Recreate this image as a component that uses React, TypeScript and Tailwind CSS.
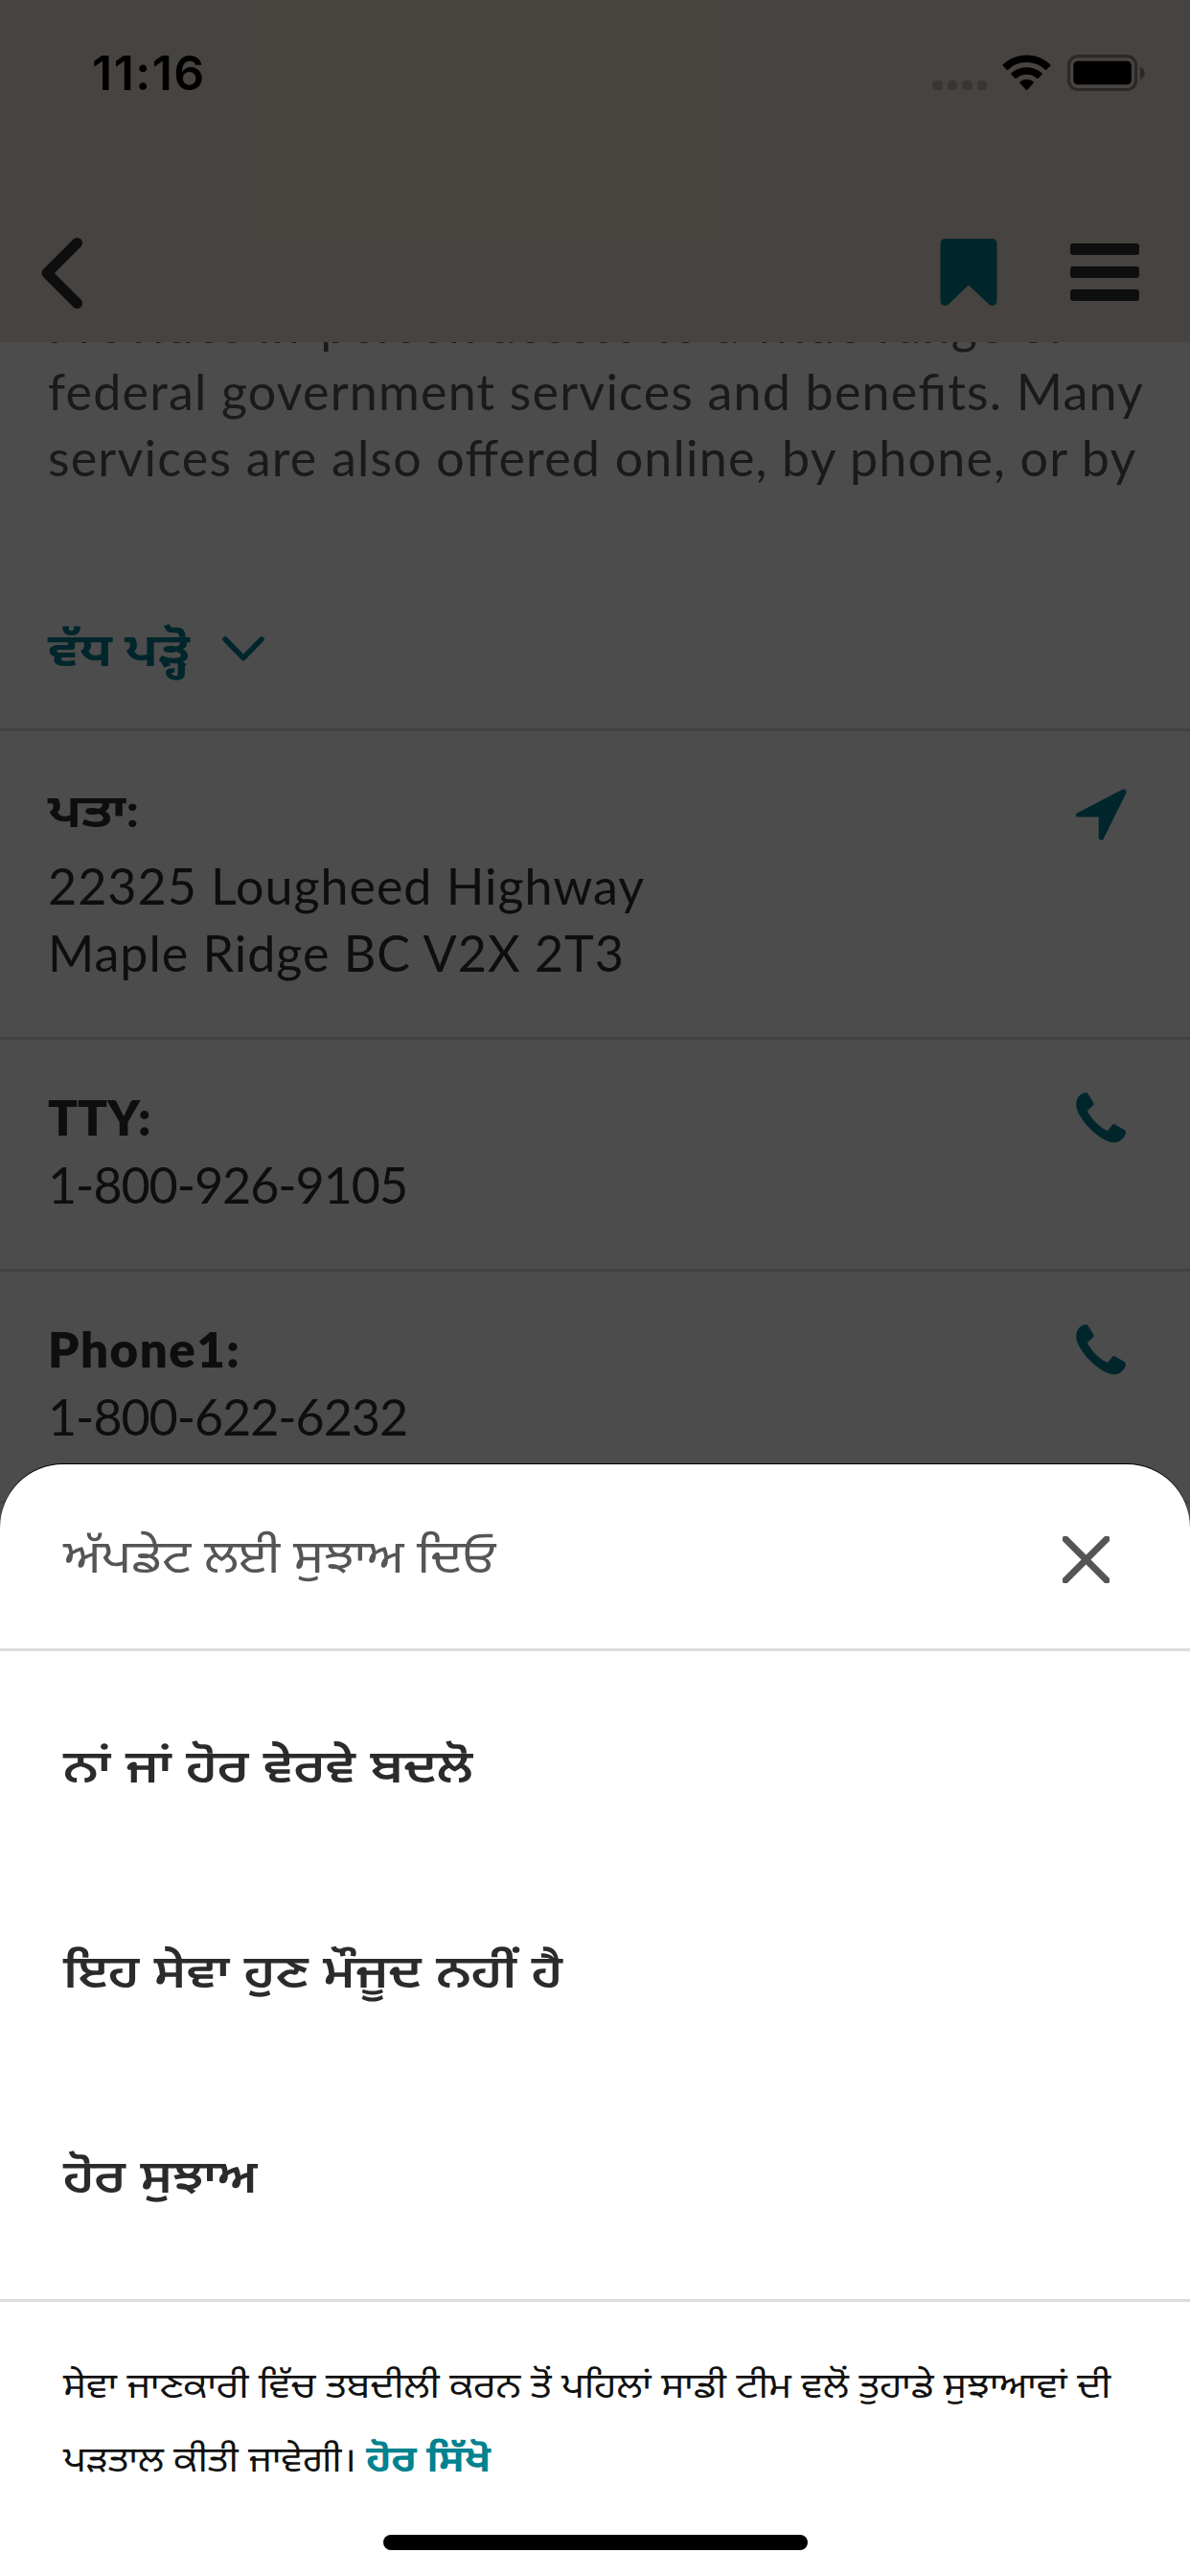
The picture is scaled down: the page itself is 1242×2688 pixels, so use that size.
import type { ReactNode } from "react";

const textFont = "font-['Lato','Noto_Sans_Gurmukhi','Lohit_Gurmukhi','Noto_Sans',sans-serif]";

// Gurmukhi copy is set slightly extended relative to the Latin text.
const extended = "inline-block origin-left scale-x-[1.125] whitespace-nowrap";

function StatusBar() {
  return (
    <div className="flex h-[152px] items-start justify-between pl-[96px] pr-[47px] pt-[57px]">
      <span className="font-['Inter',sans-serif] text-[50px] leading-[38px] font-semibold tracking-[1.500px] text-black">11:16</span>
      <div className="flex h-[38px] items-end">
        <div className="mb-px flex gap-[5px]">
          {[0, 1, 2, 3].map((i) => (
            <span key={i} className="h-[10.500px] w-[10.500px] rounded-[4px] bg-[#bdb2ab]" />
          ))}
        </div>
        <svg className="ml-[16px] h-[38px] w-[51px]" viewBox="0 0 51 38">
          <path d="M25.500 0.500C16 0.500 7.200 4.200 0.800 10.300q-.7.700 0 1.400l4 4q.7.700 1.400 0C11.300 10.900 18 8.100 25.500 8.100s14.200 2.800 19.300 7.600q.7.700 1.400 0l4-4q.7-.7 0-1.400C43.800 4.200 35 .5 25.500 .5z" />
          <path d="M25.500 13.200c-6.200 0-11.800 2.300-16 6.100q-.7.700 0 1.400l4 4q.7.700 1.400.1c2.800-2.500 6.500-4 10.600-4s7.800 1.500 10.600 4q.7.600 1.400-.1l4-4q.7-.7 0-1.400c-4.200-3.800-9.800-6.100-16-6.100z" />
          <path d="M25.500 25.800c-2.700 0-5.200 1-7.100 2.600q-.7.700 0 1.400l6.400 7q.7.700 1.400 0l6.400-7q.7-.7 0-1.400c-1.900-1.600-4.400-2.600-7.100-2.600z" />
        </svg>
        <svg className="ml-[17px] h-[38px] w-[81px]" viewBox="0 0 81 38">
          <rect x="1.600" y="1.600" width="70" height="35" rx="9.500" fill="none" stroke="#000" strokeOpacity=".4" strokeWidth="3.200" />
          <rect x="6.300" y="6.700" width="60.500" height="24.600" rx="4.500" />
          <path d="M76 13c3 1 4.700 3.300 4.700 6.200S79 24.400 76 25.500z" fillOpacity=".4" />
        </svg>
      </div>
    </div>
  );
}

function NavBar() {
  return (
    <div className="flex items-center justify-between pl-[43px] pr-[53px] pt-[95px]">
      <svg className="h-[76px] w-[44px]" viewBox="0 0 44 76" fill="none" stroke="#2f2f2f" strokeWidth="11" strokeLinecap="round" strokeLinejoin="round">
        <path d="M37.500 6.500 6 38l31.500 31.500" />
      </svg>
      <div className="mb-[3px] flex items-center gap-[76px]">
        <svg className="h-[72px] w-[60px]" viewBox="0 0 60 72" fill="#007f8f">
          <path d="M6 1h48q5.500 0 5.500 5.500V66c0 4.600-5.500 6.500-8.700 3.300L30 49.500 9.200 69.300C6 72.500 .5 70.600 .5 66V6.500Q.5 1 6 1z" />
        </svg>
        <div className="flex flex-col gap-[12px]">
          <span className="h-[12px] w-[72px] rounded-[3px] bg-[#2f2f2f]" />
          <span className="h-[12px] w-[72px] rounded-[3px] bg-[#2f2f2f]" />
          <span className="h-[12px] w-[72px] rounded-[3px] bg-[#2f2f2f]" />
        </div>
      </div>
    </div>
  );
}

function PhoneIcon() {
  return (
    <svg className="mt-[9px] h-[53px] w-[53px]" viewBox="0 0 53 53" fill="#007f8f">
      <path d="M10 .3C11.500 .2 12.300 .8 13 2L18.200 10.500C19 11.800 18.800 12.800 17.800 13.700L12.800 18C12 18.800 12 19.500 12.500 20.500 16.500 28 24 35.500 31.500 39.300 32.500 39.800 33.200 39.700 33.900 38.900L37.600 34C38.500 33 39.600 32.800 40.800 33.500L50.500 39C51.800 39.700 52.200 40.600 51.900 42 51 48 45.500 52.200 39.500 52.200 26 52.200 .2 27 .2 12.500 .2 6 4.500 .6 10 .3z" />
    </svg>
  );
}

function ArrowIcon() {
  return (
    <svg className="mt-[14px] h-[54px] w-[53px]" viewBox="0 0 53 54" fill="#007f8f">
      <path d="M48.500.7c2.700-1 5 1.200 3.800 4L28.700 52.200c-1.400 2.600-5 1.800-5-1.200V29.500H2.200c-2.800 0-3.200-3.300-.7-4.300z" />
    </svg>
  );
}

function Row({ label, icon, children }: { label: ReactNode; icon: ReactNode; children: ReactNode }) {
  return (
    <section className="flex items-start justify-between border-t-[3px] border-[#dedede] pr-[66px] pl-[50px] pt-[46px] pb-[53px]">
      <div className="text-[52px] leading-[70px] text-[#2f2f2f]">
        <h2 className="text-[51px] font-extrabold">{label}</h2>
        {children}
      </div>
      {icon}
    </section>
  );
}

function Page() {
  return (
    <div className={`flex h-[2688px] flex-col bg-white ${textFont}`}>
      <header className="relative z-10 h-[357px] shrink-0 bg-[#eee2d6]">
        <StatusBar />
        <NavBar />
      </header>
      <div className="-mt-[53px] px-[50px] text-[52px] leading-[69.500px] tracking-[1.200px] whitespace-nowrap text-[#585858] [font-feature-settings:'liga'_1]">
        <p>Provides in-person access to a wide range of</p>
        <p>federal government services and benefits. Many</p>
        <p>services are also offered online, by phone, or by</p>
      </div>
      <div className="flex h-[247px] items-center gap-[50px] pt-[83px] pb-[2px] pl-[50px] text-[48px] leading-[70px] font-bold text-[#007f8f]">
        <span className={extended}>ਵੱਧ ਪੜ੍ਹੋ</span>
        <svg className="h-[26px] w-[44px]" viewBox="0 0 44 26" fill="none" stroke="currentColor" strokeWidth="5.500" strokeLinecap="round" strokeLinejoin="round">
          <path d="M3 3l19 19.500L41 3" />
        </svg>
      </div>
      <Row label={<span className="mb-[9px] inline-block origin-left scale-x-[1.140] text-[48px] font-bold">ਪਤਾ:</span>} icon={<ArrowIcon />}>
        <p className="tracking-[1px]">22325 Lougheed Highway</p>
        <p className="tracking-[1px]">Maple Ridge BC V2X 2T3</p>
      </Row>
      <Row label="TTY:" icon={<PhoneIcon />}>
        <p className="tracking-[-1.050px]">1-800-926-9105</p>
      </Row>
      <Row label={<span className="tracking-[1.500px]">Phone1:</span>} icon={<PhoneIcon />}>
        <p className="tracking-[-1.050px]">1-800-622-6232</p>
      </Row>
      <div className="border-t-[3px] border-[#dedede]" />
    </div>
  );
}

function Sheet() {
  return (
    <div className={`absolute inset-x-0 bottom-0 flex h-[1160px] flex-col rounded-t-[66px] bg-white shadow-[0_-1px_0_#000] ${textFont}`}>
      <div className="flex h-[195px] shrink-0 items-center justify-between border-b-[3px] border-[#dddddd] pr-[84px] pl-[66px]">
        <h1 className="mb-[2px] inline-block origin-left scale-x-[1.110] text-[48px] leading-[70px] whitespace-nowrap text-[#555555]">ਅੱਪਡੇਟ ਲਈ ਸੁਝਾਅ ਦਿਓ</h1>
        <svg className="mt-[7px] h-[49px] w-[49px]" viewBox="0 0 49 49" fill="none" stroke="#555555" strokeWidth="7" strokeLinecap="square">
          <path d="M3 3l43 43M46 3L3 46" />
        </svg>
      </div>
      <ul className="flex h-[679px] shrink-0 flex-col gap-[144px] border-b-[3px] border-[#dddddd] pt-[84px] pl-[66px] text-[48px] leading-[70px] font-semibold text-[#2b2b2b] [word-spacing:1.600px]">
        <li><span className={extended}>ਨਾਂ ਜਾਂ ਹੋਰ ਵੇਰਵੇ ਬਦਲੋ</span></li>
        <li><span className={extended}>ਇਹ ਸੇਵਾ ਹੁਣ ਮੌਜੂਦ ਨਹੀਂ ਹੈ</span></li>
        <li><span className={extended}>ਹੋਰ ਸੁਝਾਅ</span></li>
      </ul>
      <p className="mt-[48px] ml-[66px] w-[980px] origin-left scale-x-[1.117] text-[36px] leading-[76px] whitespace-nowrap text-[#111111]">
        ਸੇਵਾ ਜਾਣਕਾਰੀ ਵਿੱਚ ਤਬਦੀਲੀ ਕਰਨ ਤੋਂ ਪਹਿਲਾਂ ਸਾਡੀ ਟੀਮ ਵਲੋਂ ਤੁਹਾਡੇ ਸੁਝਾਆਵਾਂ ਦੀ
        <br />
        ਪੜਤਾਲ ਕੀਤੀ ਜਾਵੇਗੀ। <a className="text-[38px] font-bold text-[#008290]">ਹੋਰ ਸਿੱਖੋ</a>
      </p>
      <div className="absolute bottom-[27px] left-[400px] h-[16px] w-[443px] rounded-full bg-black" />
    </div>
  );
}

export default function App() {
  return (
    <main className="relative h-[2688px] w-[1242px] overflow-hidden">
      <Page />
      <div className="absolute inset-0 z-20 bg-black/70" />
      <div className="absolute inset-0 z-30">
        <Sheet />
      </div>
    </main>
  );
}
